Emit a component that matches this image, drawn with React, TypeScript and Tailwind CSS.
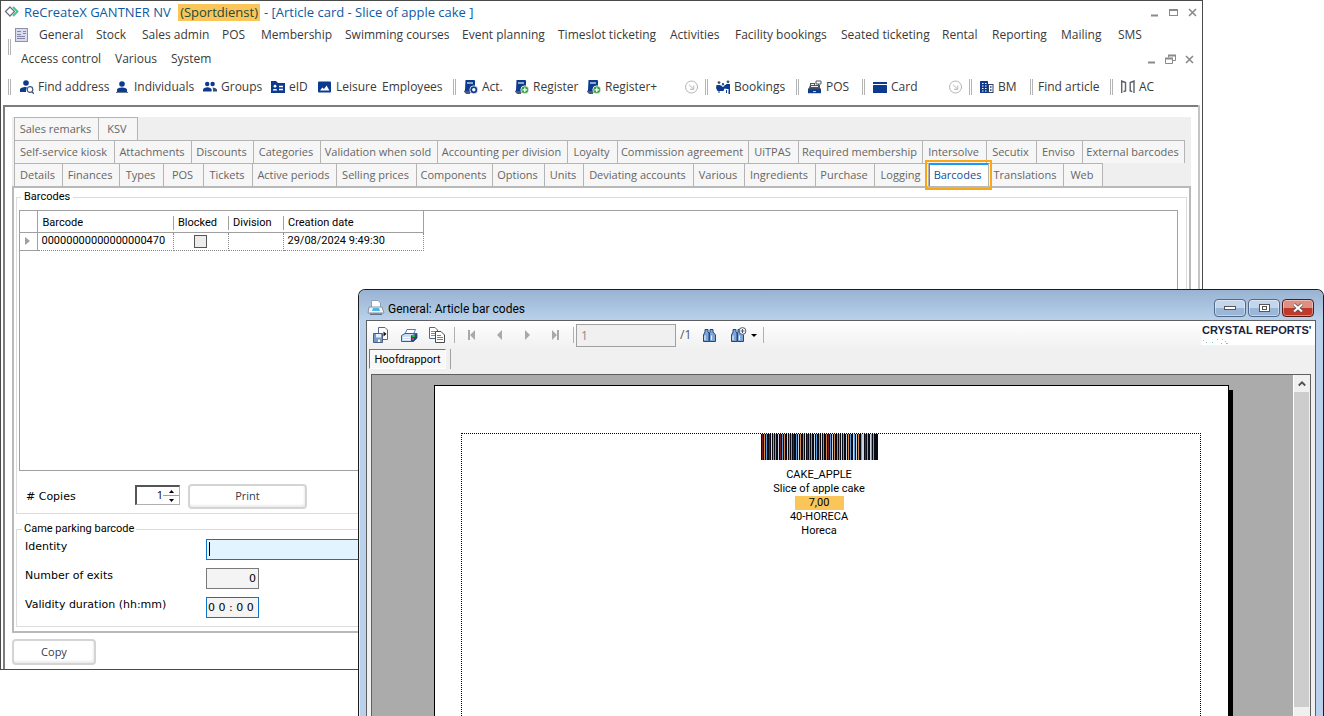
import { useState } from "react";
import type { ReactNode } from "react";

const NAVY = "#0b3a8f";

const MENU_TOP = [
    { label: "General", width: "w-[57px]" },
    { label: "Stock", width: "w-[46px]" },
    { label: "Sales admin", width: "w-20" },
    { label: "POS", width: "w-[39px]" },
    { label: "Membership", width: "w-[84px]" },
    { label: "Swimming courses", width: "w-[117px]" },
    { label: "Event planning", width: "w-24" },
    { label: "Timeslot ticketing", width: "w-28" },
    { label: "Activities", width: "w-[65px]" },
    { label: "Facility bookings", width: "w-[106px]" },
    { label: "Seated ticketing", width: "w-[101px]" },
    { label: "Rental", width: "w-[50px]" },
    { label: "Reporting", width: "w-[69px]" },
    { label: "Mailing", width: "w-[57px]" },
    { label: "SMS", width: "w-10" },
];

const MENU_BOTTOM = [
    { label: "Access control", width: "w-[94px]" },
    { label: "Various", width: "w-14" },
    { label: "System", width: "w-14" },
];

const TAB_ROWS = [
    [
        { label: "Sales remarks", width: "w-[85px]" },
        { label: "KSV", width: "w-[39px]" },
    ],
    [
        { label: "Self-service kiosk", width: "w-[101px]" },
        { label: "Attachments", width: "w-[77px]" },
        { label: "Discounts", width: "w-[62px]" },
        { label: "Categories", width: "w-[67px]" },
        { label: "Validation when sold", width: "w-[117px]" },
        { label: "Accounting per division", width: "w-[130px]" },
        { label: "Loyalty", width: "w-[50px]" },
        { label: "Commission agreement", width: "w-[131px]" },
        { label: "UiTPAS", width: "w-[50px]" },
        { label: "Required membership", width: "w-[124px]" },
        { label: "Intersolve", width: "w-[64px]" },
        { label: "Secutix", width: "w-[50px]" },
        { label: "Enviso", width: "w-[46px]" },
        { label: "External barcodes", width: "w-[102px]" },
    ],
    [
        { label: "Details", width: "w-[49px]" },
        { label: "Finances", width: "w-[57px]" },
        { label: "Types", width: "w-[44px]" },
        { label: "POS", width: "w-[40px]" },
        { label: "Tickets", width: "w-[49px]" },
        { label: "Active periods", width: "w-[84px]" },
        { label: "Selling prices", width: "w-[80px]" },
        { label: "Components", width: "w-[76px]" },
        { label: "Options", width: "w-[52px]" },
        { label: "Units", width: "w-[39px]" },
        { label: "Deviating accounts", width: "w-[110px]" },
        { label: "Various", width: "w-[51px]" },
        { label: "Ingredients", width: "w-[71px]" },
        { label: "Purchase", width: "w-[59px]" },
        { label: "Logging", width: "w-[54px]" },
        { label: "Barcodes", width: "w-[60px]" },
        { label: "Translations", width: "w-[75px]" },
        { label: "Web", width: "w-[39px]" },
    ],
];

function Svg({ children, size = 14 }: { children: ReactNode; size?: number }) {
    return (
        <svg width={size} height={size} viewBox={`0 0 ${size} ${size}`} className="shrink-0" fill="none" aria-hidden="true">
            {children}
        </svg>
    );
}

function FindIcon() {
    return (
        <Svg>
            <circle cx="6" cy="3" r="2.8" fill={NAVY} />
            <path d="M0 11V9.5C0 8 3 7 5.5 7L7 7.4L6 10V12H0Z" fill={NAVY} />
            <circle cx="10" cy="9.5" r="2.8" stroke="#44597f" strokeWidth="1.2" fill="#fff" />
            <path d="M12 11.5L14 14" stroke="#44597f" strokeWidth="1.4" />
        </Svg>
    );
}

function PersonIcon() {
    return (
        <Svg>
            <circle cx="6" cy="4" r="2.8" fill={NAVY} />
            <path d="M1 12V9.8C1 8.4 4 7.6 6 7.6S11 8.4 11 9.8V12Z" fill={NAVY} />
            <path d="M0 12.4H12" stroke="#5f6b80" />
        </Svg>
    );
}

function GroupIcon() {
    return (
        <Svg>
            <circle cx="4.2" cy="4" r="2.2" fill={NAVY} />
            <circle cx="9.6" cy="4" r="2.2" fill={NAVY} />
            <path d="M0 11.5V9.6C0 8.2 2.4 7.2 4.4 7.2S8.6 8.2 8.6 9.6V11.5Z" fill={NAVY} />
            <path d="M9.6 7.4C11.6 7.4 14 8.4 14 9.8V11.5H10V9.6Z" fill="#3c4c6b" />
        </Svg>
    );
}

function EidIcon() {
    return (
        <Svg>
            <path d="M0 1H5L7 3H14V13H0Z" fill={NAVY} />
            <circle cx="4" cy="6.2" r="1.4" fill="#fff" />
            <path d="M1.8 10.5C1.8 8.6 6.2 8.6 6.2 10.5Z" fill="#fff" />
            <path d="M8 6.5H12M8 9.5H12" stroke="#fff" strokeWidth="1.4" />
        </Svg>
    );
}

function LeisureIcon() {
    return (
        <Svg>
            <rect y="1.5" width="13" height="11" rx="1" fill={NAVY} />
            <path d="M2 10.5L4.4 7.4L6 9L8.6 5.6L11.4 10.5Z" fill="#fff" />
        </Svg>
    );
}

function FormIcon({ plus }: { plus?: boolean }) {
    return (
        <Svg>
            <path d="M1.5 0H10C11 0 11.5 1 11 2V13H2.5L0 12L1 10Z" fill={NAVY} />
            <path d="M3 3H9" stroke="#fff" strokeWidth="1.1" />
            <path d="M0 11H6V14H2Z" fill="#4d5a70" />
            <circle cx="9.8" cy="9.8" r="4" fill={plus ? "#2f9c3f" : NAVY} stroke="#fff" strokeWidth="0.8" />
            {plus ? (
                <path d="M9.8 7.4V12.2M7.4 9.8H12.2" stroke="#fff" strokeWidth="1.3" />
            ) : (
                <circle cx="9.8" cy="9.8" r="1.7" fill="#fff" />
            )}
        </Svg>
    );
}

function BookingsIcon() {
    return (
        <Svg>
            <circle cx="3" cy="2.6" r="1.4" fill="#48505e" />
            <circle cx="12" cy="1.8" r="1.4" fill="#48505e" />
            <path d="M0.5 5H4L7 7L10.5 4H14V14H12.5V9H11L8.5 8.5L7.5 11H1.5L0 8Z" fill={NAVY} />
            <path d="M6 5.5L7 3L8 5.5M3 11V13M10.5 10V13" stroke={NAVY} />
        </Svg>
    );
}

function RegisterIcon() {
    return (
        <Svg>
            <path d="M2 3H7V5H12V9H0.5L2 5Z" fill="#50565f" />
            <path d="M8 1H13V4H8ZM10.5 4V6" stroke="#50565f" />
            <path d="M3 4.5H6M3 6.5H10" stroke="#fff" strokeWidth="0.9" />
            <rect y="8.5" width="13" height="2" fill="#33415c" />
            <rect y="10" width="13" height="3.2" fill={NAVY} />
            <path d="M5 11.6H8" stroke="#fff" strokeWidth="0.8" />
        </Svg>
    );
}

function CardIcon() {
    return (
        <Svg>
            <rect y="2" width="14" height="2" fill={NAVY} />
            <rect y="5" width="14" height="8" rx="0.6" fill={NAVY} />
        </Svg>
    );
}

function BuildingIcon() {
    return (
        <Svg>
            <rect y="1" width="8" height="12" rx="0.5" fill={NAVY} />
            <path d="M2 3.5H3.5M5 3.5H6.5M2 6H3.5M5 6H6.5M2 8.5H3.5M5 8.5H6.5M2 11H3.5M5 11H6.5" stroke="#fff" strokeWidth="1.2" />
            <rect x="8.5" y="4.5" width="4.5" height="8" stroke="#33415c" />
            <path d="M10 7H11.5M10 10H11.5" stroke={NAVY} strokeWidth="1.3" />
        </Svg>
    );
}

function GateIcon() {
    return (
        <Svg>
            <path d="M0.7 13V1L4.5 2.5V11L2.5 11.5M13 13V1L9.2 2.5V11L11.2 11.5" stroke="#5c626b" strokeWidth="1.4" />
        </Svg>
    );
}

function ExpandIcon() {
    return (
        <Svg>
            <circle cx="6.5" cy="7" r="6" stroke="#b5b5b5" />
            <path d="M4.2 4.8L8.5 9M8.8 5.5V9.3H5" stroke="#b5b5b5" />
        </Svg>
    );
}

const TOOLS: { label?: string; icon?: ReactNode; grip?: boolean; width: string }[] = [
    { grip: true, width: "w-3" },
    { label: "Find address", icon: <FindIcon />, width: "w-24" },
    { label: "Individuals", icon: <PersonIcon />, width: "w-[87px]" },
    { label: "Groups", icon: <GroupIcon />, width: "w-[68px]" },
    { label: "eID", icon: <EidIcon />, width: "w-[47px]" },
    { label: "Leisure", icon: <LeisureIcon />, width: "w-[64px]" },
    { label: "Employees", width: "w-[71px]" },
    { grip: true, width: "w-[11px]" },
    { label: "Act.", icon: <FormIcon />, width: "w-[51px]" },
    { label: "Register", icon: <FormIcon plus />, width: "w-[72px]" },
    { label: "Register+", icon: <FormIcon plus />, width: "w-[98px]" },
    { icon: <ExpandIcon />, width: "w-5" },
    { grip: true, width: "w-[11px]" },
    { label: "Bookings", icon: <BookingsIcon />, width: "w-20" },
    { grip: true, width: "w-3" },
    { label: "POS", icon: <RegisterIcon />, width: "w-[54px]" },
    { grip: true, width: "w-[11px]" },
    { label: "Card", icon: <CardIcon />, width: "w-[76px]" },
    { icon: <ExpandIcon />, width: "w-5" },
    { grip: true, width: "w-[11px]" },
    { label: "BM", icon: <BuildingIcon />, width: "w-[50px]" },
    { grip: true, width: "w-2" },
    { label: "Find article", width: "w-[72px]" },
    { grip: true, width: "w-[11px]" },
    { label: "AC", icon: <GateIcon />, width: "w-10" },
];

function Grip() {
    return <span className="block h-4 w-[3px] border-x border-[#b4b4b4]" />;
}

function WindowButtons({ restore }: { restore?: boolean }) {
    return (
        <div className="flex items-center gap-2">
            <button type="button" aria-label="Minimize">
                <Svg size={11}><path d="M2 8.5H9" stroke="#8a8a8a" strokeWidth="2" /></Svg>
            </button>
            <button type="button" aria-label={restore ? "Restore" : "Maximize"}>
                {restore ? (
                    <Svg size={11}>
                        <path d="M3.5 3.5V1.5H10.5V6.5H7.5M0.5 4.5H7.5V9.5H0.5Z" stroke="#8a8a8a" />
                        <path d="M3 1.5H11M0 4.5H8" stroke="#8a8a8a" strokeWidth="2" />
                    </Svg>
                ) : (
                    <Svg size={11}>
                        <rect x="1.5" y="2.5" width="8" height="6" stroke="#8a8a8a" />
                        <path d="M1 3H10" stroke="#8a8a8a" strokeWidth="2" />
                    </Svg>
                )}
            </button>
            <button type="button" aria-label="Close">
                <Svg size={11}><path d="M2 2L9 9M9 2L2 9" stroke="#8a8a8a" strokeWidth="1.6" /></Svg>
            </button>
        </div>
    );
}

function TabStrip({ active, onSelect }: { active: string; onSelect: (label: string) => void }) {
    return (
        <div className="bg-[#efefef] pl-0.5 text-[11px] text-[#666]">
            {TAB_ROWS.map((row, i) => (
                <div key={i} className="flex h-[23px]">
                    {row.map((tab, n) => {
                        const isActive = i === 2 && tab.label === active;
                        return (
                            <button
                                key={tab.label}
                                type="button"
                                onClick={() => onSelect(tab.label)}
                                className={`${tab.width} relative flex shrink-0 items-center justify-center whitespace-nowrap border-r border-t pr-0.5 ${n === 0 ? "border-l" : ""} ${
                                    isActive
                                        ? "border-r-[#b4b4b4] border-t-[#1b9bf0] bg-white text-[#0f4f9e]"
                                        : "border-[#b4b4b4] bg-[#f6f6f6]"
                                }`}
                            >
                                {tab.label}
                                {isActive && (
                                    <>
                                        <span className="absolute inset-0 border-l border-t border-[#1b9bf0]" />
                                        <span className="absolute -inset-x-1 -bottom-1 -top-1 z-10 border-2 border-[#f7a814]" />
                                    </>
                                )}
                            </button>
                        );
                    })}
                </div>
            ))}
        </div>
    );
}

function BarcodeGrid() {
    const headCell = "-mr-px h-[14px] border-r border-[#a0a0a0] pl-[5px] leading-[14px]";
    const bodyCell = "border-b border-r border-dotted border-[#8a8a8a] p-0";

    return (
        <div className="h-[261px] border border-[#a0a0a0] bg-white">
            <table className="table-fixed border-collapse font-['Roboto'] text-[11px] text-black">
                <colgroup>
                    <col className="w-[17px]" />
                    <col className="w-[136px]" />
                    <col className="w-[55px]" />
                    <col className="w-[55px]" />
                    <col className="w-[140px]" />
                </colgroup>
                <thead>
                    <tr className="h-[21px] border-b border-[#a0a0a0] text-left">
                        <th className="border-r border-[#a0a0a0]" aria-label="Row marker" />
                        <th className="p-0 pt-1 font-normal"><div className={headCell}>Barcode</div></th>
                        <th className="p-0 pt-1 font-normal"><div className={headCell}>Blocked</div></th>
                        <th className="p-0 pt-1 font-normal"><div className={headCell}>Division</div></th>
                        <th className="border-r border-[#a0a0a0] p-0 pl-[5px] pt-1 font-normal leading-[14px]">Creation date</th>
                    </tr>
                </thead>
                <tbody>
                    <tr className="h-[18px] leading-[14px]">
                        <td className="border-b border-r border-[#a0a0a0] p-0">
                            <svg width="6" height="8" viewBox="0 0 6 8" className="mx-auto" aria-hidden="true"><path d="M0 0L5 4L0 8Z" fill="#a0a0a0" /></svg>
                        </td>
                        <td className={`${bodyCell} pl-1`}>00000000000000000470</td>
                        <td className={bodyCell}>
                            <input type="checkbox" aria-label="Blocked" className="mx-auto block size-[13px] appearance-none border border-[#555] bg-[#ececec]" />
                        </td>
                        <td className={bodyCell} />
                        <td className={`${bodyCell} pl-1`}>29/08/2024 9:49:30</td>
                    </tr>
                </tbody>
            </table>
        </div>
    );
}

// Bar colours of the printed code, one per pixel column, with subpixel fringes
const BARS = "krkokbkkrkwkokbkkwkrkbkokkwkbkokrkkbkwkokkbkwkrkbkokkwkbkkokwkbkkokrkbkwkokkbkokwkbkkwkokbkkwbkwkokkbwwkrkokkwbkokkkk";
const BAR_COLORS: Record<string, string> = { k: "#0a0a14", o: "#d08a4a", b: "#5d9fdc", r: "#7a1c1c", w: "#c9d6e2" };

function Barcode() {
    return (
        <svg width="117" height="26" viewBox="0 0 117 26" role="img" aria-label="Barcode" shapeRendering="crispEdges">
            {BARS.split("").map((c, i) => (
                <rect key={i} x={i} width="1" height="26" fill={BAR_COLORS[c]} />
            ))}
        </svg>
    );
}

function Binoculars({ plus }: { plus?: boolean }) {
    return (
        <svg width="17" height="16" viewBox="0 0 17 16" fill="none" aria-hidden="true">
            <path d="M3 2.5H6V5L7 6V14.5H1.5V8L3 5ZM11 2.5H8V5L7.5 6V14.5H13.5V8L11 5Z" fill="#7fa5d6" stroke="#24467e" />
            <path d="M3 8.5V13M9.5 8.5V13" stroke="#e3eefb" strokeWidth="1.2" />
            {plus && (
                <>
                    <circle cx="12.5" cy="4" r="3.4" fill="#fff" stroke="#555" />
                    <path d="M12.5 2V6M10.5 4H14.5" stroke="#44598a" />
                </>
            )}
        </svg>
    );
}

function NavArrow({ label, d }: { label: string; d: string }) {
    return (
        <button type="button" aria-label={label} className="flex w-7 justify-center">
            <svg width="9" height="10" viewBox="0 0 9 10" aria-hidden="true"><path d={d} fill="#a9a9a9" /></svg>
        </button>
    );
}

function ReportToolbar() {
    return (
        <div className="flex h-7 items-center bg-linear-to-b from-white to-[#f0f0f0] pl-1.5">
            <button type="button" aria-label="Export" className="w-7">
                <svg width="17" height="17" viewBox="0 0 17 17" fill="none" aria-hidden="true">
                    <path d="M5.5 0.5H12L14.5 3V12.5H5.5Z" fill="#fff" stroke="#4a6b96" />
                    <path d="M10.5 4.5L13.5 7L10.5 9.5Z" fill="#111" />
                    <path d="M0.5 6.5H9.5V15.5H0.5Z" fill="#6f9bd1" stroke="#4a5f80" />
                    <rect x="3" y="7" width="5" height="3.5" fill="#e8eef6" />
                    <rect x="3" y="12" width="5" height="3" fill="#8f97a3" />
                    <rect x="5" y="12.5" width="2" height="2.5" fill="#fff" />
                </svg>
            </button>
            <button type="button" aria-label="Print report" className="w-7">
                <svg width="17" height="15" viewBox="0 0 17 15" fill="none" aria-hidden="true">
                    <path d="M6 1.5H14.5L12.5 6H4Z" fill="#fff" stroke="#4d7fc0" />
                    <path d="M0.5 7.5L4 5.5H16V10L12.5 13.5H0.5Z" fill="#c9dcf2" stroke="#3a5f96" />
                    <path d="M10 7.5L16 5.5V10.5L12.5 13.5H10Z" fill="#26468a" />
                    <rect x="11" y="7" width="3" height="2" fill="#21b04a" />
                    <rect x="11" y="10" width="2" height="2" fill="#d93a2c" />
                    <path d="M2 9.5H9M2 11.5H9" stroke="#fff" />
                </svg>
            </button>
            <button type="button" aria-label="Copy page" className="w-[25px]">
                <svg width="17" height="17" viewBox="0 0 17 17" fill="none" aria-hidden="true">
                    <path d="M0.5 0.5H6L8.5 3V11.5H0.5Z" fill="#fff" stroke="#4a6b96" />
                    <path d="M2 4.5H6M2 6.5H6M2 8.5H6" stroke="#5c9bd6" />
                    <path d="M6.5 4.5H12L15.5 8V15.5H6.5Z" fill="#fff" stroke="#4a4a4a" />
                    <path d="M8 8.5H12M8 10.5H14M8 12.5H14" stroke="#3f8fd0" />
                </svg>
            </button>
            <span className="mr-0.5 h-4 w-px bg-[#b0b0b0]" />
            <NavArrow label="First page" d="M1 0H3V10H1ZM8 0V10L3 5Z" />
            <NavArrow label="Previous page" d="M7 0V10L2 5Z" />
            <NavArrow label="Next page" d="M2 0V10L7 5Z" />
            <NavArrow label="Last page" d="M1 0L6 5L1 10ZM6 0H8V10H6Z" />
            <span className="ml-1 mr-0.5 h-4 w-px bg-[#b0b0b0]" />
            <input aria-label="Page number" defaultValue="1" disabled className="h-[23px] w-[100px] border border-[#a0a0a0] bg-[#f0f0f0] px-1 text-xs text-[#8a8a8a]" />
            <span className="ml-1 w-[22px] text-xs text-[#555]">/1</span>
            <button type="button" aria-label="Find text" className="w-7"><Binoculars /></button>
            <button type="button" aria-label="Zoom" className="flex items-center gap-1">
                <Binoculars plus />
                <svg width="6" height="3" viewBox="0 0 6 3" aria-hidden="true"><path d="M0 0H6L3 3Z" fill="#000" /></svg>
            </button>
            <span className="ml-1.5 h-4 w-px bg-[#b0b0b0]" />
            <div className="relative ml-auto h-6 w-[114px] self-start bg-white font-['Liberation_Sans'] leading-[18px]">
                <div className="whitespace-nowrap pl-px text-[11px] font-bold text-[#1c2440]">CRYSTAL REPORTS'</div>
                <svg width="30" height="8" viewBox="0 0 30 8" className="absolute bottom-0 left-0" aria-hidden="true">
                    <path d="M2 3H3V4H2ZM5 5H6V6H5ZM11 5H12V6H11ZM16 2H17V3H16ZM21 2H22V3H21ZM24 4H25V5H24ZM20 6H21V7H20ZM25 6H27V7H25Z" fill="#7cc4c4" />
                </svg>
            </div>
        </div>
    );
}

function ReportDialog() {
    const titleButton = "flex h-[18px] items-center justify-center rounded-sm border shadow-[inset_0_0_0_1px_#ffffff66]";

    return (
        <section className="absolute bottom-0 left-[358px] right-0 top-[289px] flex flex-col overflow-hidden rounded-t-[7px] border border-b-0 border-[#1c1c1c] bg-[#b9d1ea] px-[7px] shadow-[inset_1px_1px_0_#e6f0fa]">
            <header className="-mx-[7px] flex h-[30px] shrink-0 items-center bg-linear-to-b from-[#98b3d2] to-[#b9d1ea] pl-2 pr-[9px] pt-1.5 text-xs text-black">
                <svg width="18" height="16" viewBox="0 0 18 16" fill="none" aria-hidden="true">
                    <path d="M4.5 0.5H11L13.5 3V8H4.5Z" fill="#fff" stroke="#8fa3b8" />
                    <path d="M2 7H15L17 13H1Z" fill="#f1f3f6" stroke="#8893a3" />
                    <path d="M6 8H12L13 11H5Z" fill="#4db6ea" />
                    <path d="M3 13.5H15V15H3Z" fill="#62758e" />
                </svg>
                <h2 className="ml-[3px] whitespace-nowrap pt-0.5 font-['Roboto']">General: Article bar codes</h2>
                <div className="ml-auto flex gap-0.5">
                    <button type="button" aria-label="Minimize report" className={`${titleButton} w-8 border-[#51698a] bg-linear-to-b from-[#c3d6ec] from-50% to-[#9bb7d8] to-50%`}>
                        <span className="h-1 w-3 border border-[#555] bg-white" />
                    </button>
                    <button type="button" aria-label="Maximize report" className={`${titleButton} w-8 border-[#51698a] bg-linear-to-b from-[#c3d6ec] from-50% to-[#9bb7d8] to-50%`}>
                        <span className="flex h-2 w-[11px] items-center justify-center border border-[#555] bg-white"><span className="h-1 w-[5px] border border-[#555]" /></span>
                    </button>
                    <button type="button" aria-label="Close report" className={`${titleButton} w-8 border-[#5a1a14] bg-linear-to-b from-[#dd8f83] from-50% to-[#bf3a2b] to-50%`}>
                        <Svg size={12}>
                            <path d="M2 2.5L10 9.5M10 2.5L2 9.5" stroke="#4c4c4c" strokeWidth="3.6" />
                            <path d="M2 2.5L10 9.5M10 2.5L2 9.5" stroke="#fff" strokeWidth="2.2" />
                        </Svg>
                    </button>
                </div>
            </header>

            <div className="flex min-h-0 flex-1 flex-col border border-b-0 border-[#5f5f5f] bg-[#f0f0f0] pr-1">
                <div className="-mr-1"><ReportToolbar /></div>
                <div className="flex h-[25px] items-start gap-1 pl-0.5">
                    <button type="button" className="h-5 w-[77px] whitespace-nowrap border border-b-white border-l-[#777] border-r-white border-t-[#777] bg-[#f8f8f8] pt-0.5 font-['Roboto'] text-[11px] leading-4 text-black">Hoofdrapport</button>
                    <span className="h-5 w-px bg-[#a0a0a0]" />
                </div>
                <div className="ml-1 flex min-h-0 flex-1 border border-b-0 border-[#5f5f5f] bg-[#ababab]">
                    <div className="min-w-0 flex-1 overflow-hidden pl-[62px] pr-16 pt-2.5">
                        <article className="h-full border border-b-0 border-black bg-white pl-[26px] pr-[27px] pt-[47px] shadow-[4px_5px_0_#000]">
                            <div className="flex h-full flex-col items-center border border-b-0 border-dotted border-black pr-6 text-center font-['Roboto'] text-[11px] leading-[14px] text-black">
                                <Barcode />
                                <p className="mt-2">CAKE_APPLE</p>
                                <p>Slice of apple cake</p>
                                <p className="w-[49px] bg-[#fac65a]">7,00</p>
                                <p>40-HORECA</p>
                                <p>Horeca</p>
                            </div>
                        </article>
                    </div>
                    <div className="flex w-[17px] flex-col border-l border-white bg-[#f0f0f0] pb-[9px]">
                        <button type="button" aria-label="Scroll up" className="flex h-[17px] items-center justify-center">
                            <Svg size={8}><path d="M0.8 5.5L4 2.3L7.2 5.5" stroke="#505050" strokeWidth="1.8" /></Svg>
                        </button>
                        <div className="mr-px flex-1 bg-[#cdcdcd]" />
                    </div>
                </div>
            </div>
        </section>
    );
}

export default function App() {
    const [activeTab, setActiveTab] = useState("Barcodes");
    const [copies, setCopies] = useState(1);
    const pushButton = "rounded-sm border-2 border-[#d4d4d4] bg-white text-[11px] text-[#3a3a4a] shadow-[inset_-1px_-2px_2px_#ececec]";

    return (
        <main className="relative min-h-screen overflow-hidden bg-white font-['Open_Sans',sans-serif]">
            <div className="mr-[121px] border border-[#4a4a4a] bg-white px-0.5">
                {/* Title bar */}
                <header className="flex h-[22px] items-center pl-px pr-0.5">
                    <svg width="16" height="14" viewBox="0 0 16 14" fill="none" aria-hidden="true">
                        <path d="M6 2L10.5 6.5L6 11L1.5 6.5Z" stroke="#6a7282" strokeWidth="1.3" />
                        <path d="M9 2L13.5 6.5L9 11" stroke="#35c98f" strokeWidth="1.8" />
                    </svg>
                    <h1 className="ml-1 flex items-center whitespace-pre text-[13px] leading-[17px] text-[#0f5aa5]">
                        ReCreateX GANTNER NV <span className="mx-1 bg-[#fac65a] px-0.5 text-[#1d4a3c]">(Sportdienst)</span>- [Article card - Slice of apple cake ]
                    </h1>
                    <div className="ml-auto"><WindowButtons /></div>
                </header>

                {/* Menu bar */}
                <nav className="flex items-center pl-[5px] text-xs text-[#3a3a3a]">
                    <Grip />
                    <div className="min-w-0 flex-1">
                        <div className="flex h-6 items-center pl-1">
                            <svg width="13" height="14" viewBox="0 0 13 14" fill="none" className="mr-[11px] shrink-0" aria-hidden="true">
                                <rect x="0.5" y="0.5" width="12" height="13" fill="#d9dced" stroke="#8f8fae" />
                                <path d="M2 3.5H6M2 6.5H6M2 8.5H10M2 10.5H10M8 3.5H11M8 5.5H11" stroke="#8585a5" />
                            </svg>
                            {MENU_TOP.map((item) => (
                                <button key={item.label} type="button" className={`${item.width} shrink-0 whitespace-nowrap text-left`}>{item.label}</button>
                            ))}
                        </div>
                        <div className="flex h-6 items-center pl-2.5">
                            {MENU_BOTTOM.map((item) => (
                                <button key={item.label} type="button" className={`${item.width} shrink-0 whitespace-nowrap text-left`}>{item.label}</button>
                            ))}
                            <div className="ml-auto mr-[5px]"><WindowButtons restore /></div>
                        </div>
                    </div>
                </nav>

                {/* Tool bar */}
                <div className="flex h-[34px] items-center pb-0.5 pl-[5px] text-xs text-[#3a3a3a]">
                    {TOOLS.map((tool, i) =>
                        tool.grip ? (
                            <span key={i} className={`${tool.width} shrink-0`}><Grip /></span>
                        ) : (
                            <button key={i} type="button" aria-label={tool.label ?? "Expand"} className={`${tool.width} flex shrink-0 items-center gap-1 whitespace-nowrap text-left`}>
                                {tool.icon}
                                {tool.label}
                            </button>
                        )
                    )}
                </div>

                <div className="border-r-2 border-[#c4c4c4]">
                    <div className="border-l-2 border-t-2 border-[#7d7d7d] pb-1 pl-[7px] pr-[7px] pt-2.5">
                        <TabStrip active={activeTab} onSelect={setActiveTab} />

                        <div className="border-2 border-[#b9b9b9] px-0.5 pb-1 pt-[2px]">
                            <fieldset className="border border-[#dcdcdc] px-0.5 pb-1">
                                <legend className="ml-0.5 px-[3px] font-['Roboto'] text-[11px] leading-[14px] text-black">Barcodes</legend>
                                <div className="pr-1.5 pt-1.5"><BarcodeGrid /></div>
                                <div className="flex h-[38px] items-end pl-[7px] text-[11px]">
                                    <label htmlFor="copies" className="w-[109px] pb-1 font-['DejaVu_Sans'] leading-4 text-black"># Copies</label>
                                    <div className="mb-1 flex h-5 w-[45px] border border-l-2 border-t-2 border-[#b0b0b0] border-l-[#555] border-t-[#555]">
                                        <input id="copies" value={copies} onChange={(e) => setCopies(Number(e.target.value) || 0)} className="w-[26px] min-w-0 text-right text-black outline-none" />
                                        <div className="flex flex-1 flex-col">
                                            <button type="button" aria-label="More copies" onClick={() => setCopies(copies + 1)} className="flex flex-1 items-center justify-center border-b border-[#a0a0a0]">
                                                <svg width="5" height="3" viewBox="0 0 5 3" aria-hidden="true"><path d="M0 3L2.5 0L5 3Z" fill="#000" /></svg>
                                            </button>
                                            <button type="button" aria-label="Fewer copies" onClick={() => setCopies(Math.max(0, copies - 1))} className="flex flex-1 items-center justify-center">
                                                <svg width="5" height="3" viewBox="0 0 5 3" aria-hidden="true"><path d="M0 0H5L2.5 3Z" fill="#000" /></svg>
                                            </button>
                                        </div>
                                    </div>
                                    <button type="button" className={`${pushButton} ml-2 h-[25px] w-[119px]`}>Print</button>
                                </div>
                            </fieldset>

                            <fieldset className="mt-2 border border-[#dcdcdc] px-2 pb-2 text-[11px] text-black">
                                <legend className="-ml-[3px] px-0.5 font-['Roboto'] leading-[14px]">Came parking barcode</legend>
                                <div className="flex flex-col gap-2 pt-[3px] font-['DejaVu_Sans']">
                                    <div className="flex">
                                        <label htmlFor="identity" className="w-[181px] leading-4">Identity</label>
                                        <div className="relative w-[300px]">
                                            <input id="identity" className="block h-[21px] w-full border border-[#0f74cc] bg-[#e1f4ff] px-1 outline-none" />
                                            <span className="absolute left-[3px] top-[3px] h-[14px] w-px bg-black" />
                                        </div>
                                    </div>
                                    <div className="flex">
                                        <label htmlFor="exits" className="w-[181px] leading-4">Number of exits</label>
                                        <input id="exits" defaultValue="0" className="h-[21px] w-[53px] border border-[#7a7a7a] bg-[#f4f4f4] px-0.5 text-right" />
                                    </div>
                                    <div className="flex">
                                        <label htmlFor="duration" className="w-[181px] leading-4">Validity duration (hh:mm)</label>
                                        <input id="duration" defaultValue="0 0 : 0 0" className="h-[21px] w-[53px] border border-[#0f74cc] bg-[#f4f4f4] px-px" />
                                    </div>
                                </div>
                            </fieldset>
                        </div>

                        <button type="button" className={`${pushButton} mt-1.5 block h-[26px] w-[84px]`}>Copy</button>
                    </div>
                </div>
            </div>

            <ReportDialog />
        </main>
    );
}
